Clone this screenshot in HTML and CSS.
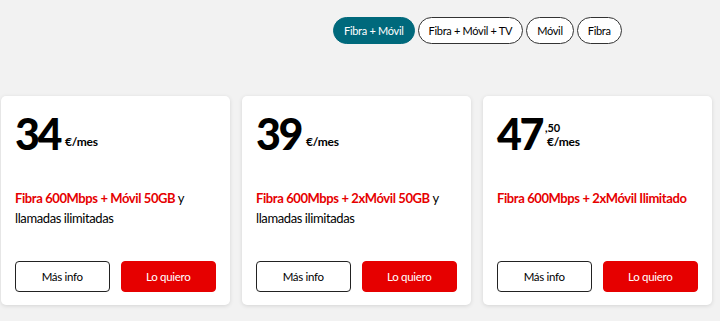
FILE: index.html
```html
<!DOCTYPE html>
<html lang="es">
<head>
<meta charset="utf-8">
<link rel="stylesheet" href="styles.css">
</head>
<body>
<div class="page">
  <nav class="tabs">
    <button class="tab active">Fibra + Móvil</button>
    <button class="tab">Fibra + Móvil + TV</button>
    <button class="tab">Móvil</button>
    <button class="tab">Fibra</button>
  </nav>
  <div class="cards">
    <div class="card">
      <div class="price"><span class="amount">34</span><span class="unit"><span class="cents"></span><span class="per">€/mes</span></span></div>
      <p class="desc"><strong>Fibra 600Mbps + Móvil 50GB</strong> y llamadas ilimitadas</p>
      <div class="actions"><button class="btn outline">Más info</button><button class="btn primary">Lo quiero</button></div>
    </div>
    <div class="card">
      <div class="price"><span class="amount">39</span><span class="unit"><span class="cents"></span><span class="per">€/mes</span></span></div>
      <p class="desc"><strong>Fibra 600Mbps + 2xMóvil 50GB</strong> y llamadas ilimitadas</p>
      <div class="actions"><button class="btn outline">Más info</button><button class="btn primary">Lo quiero</button></div>
    </div>
    <div class="card">
      <div class="price"><span class="amount">47</span><span class="unit"><span class="cents">,50</span><span class="per">€/mes</span></span></div>
      <p class="desc"><strong>Fibra 600Mbps + 2xMóvil Ilimitado</strong></p>
      <div class="actions"><button class="btn outline">Más info</button><button class="btn primary">Lo quiero</button></div>
    </div>
  </div>
</div>
</body>
</html>
```
FILE: styles.css
```css
html, body {
  margin: 0;
  padding: 0;
  background: #f2f2f2;
  font-family: "Lato", "Liberation Sans", sans-serif;
  color: #000;
}
.page {
  width: 720px;
  height: 321px;
  overflow: hidden;
}
.tabs {
  display: flex;
  gap: 3px;
  padding: 17px 0 0 333px;
  height: 27px;
}
.tab {
  height: 27px;
  padding: 0 10px;
  border: 1px solid #333;
  border-radius: 14px;
  background: #fff;
  font-family: inherit;
  font-size: 11px;
  letter-spacing: -0.3px;
  color: #000;
}
.tab.active {
  background: #00697c;
  border-color: #00697c;
  color: #fff;
}
.cards {
  display: flex;
  gap: 12px;
  padding: 52px 0 0 1px;
}
.card {
  width: 229px;
  height: 209px;
  box-sizing: border-box;
  background: #fff;
  border-radius: 5px;
  box-shadow: 0 1px 4px rgba(0,0,0,0.12);
  padding: 14px 14px 0 14px;
  display: flex;
  flex-direction: column;
}
.price {
  display: flex;
  align-items: flex-end;
  height: 48px;
}
.amount {
  font-size: 43px;
  font-weight: 900;
  line-height: 48px;
  letter-spacing: -2.5px;
}
.unit {
  display: flex;
  flex-direction: column;
  margin-left: 5px;
  padding-bottom: 9px;
  font-weight: 700;
}
.cents {
  font-size: 11px;
  line-height: 14px;
  margin-left: -2px;
}
.per {
  font-size: 12px;
  line-height: 14px;
  letter-spacing: -0.2px;
}
.desc {
  margin: 30px 0 0 0;
  font-size: 13px;
  line-height: 20px;
  height: 40px;
  letter-spacing: -0.4px;
}
.desc strong {
  color: #e60000;
}
.actions {
  display: flex;
  gap: 11px;
  margin-top: 33px;
}
.btn {
  width: 95px;
  height: 31px;
  border-radius: 4px;
  font-family: inherit;
  font-size: 11.5px;
  letter-spacing: -0.3px;
}
.btn.outline {
  background: #fff;
  border: 1px solid #222;
  color: #000;
}
.btn.primary {
  width: 96px;
  background: #e60000;
  border: 1px solid #e60000;
  color: #fff;
}
```
